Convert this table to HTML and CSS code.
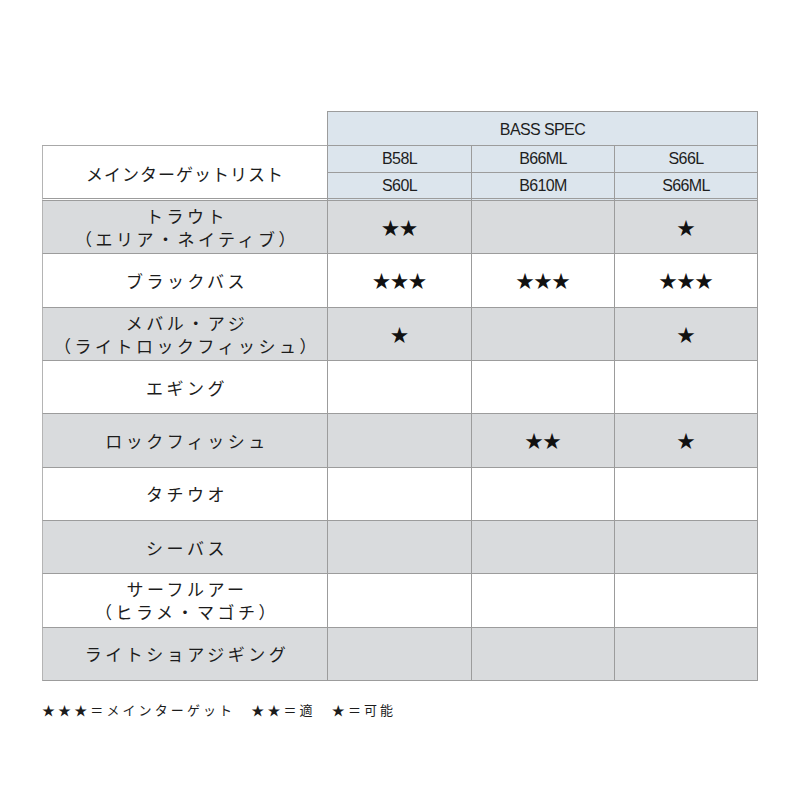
FILE: index.html
```html
<!DOCTYPE html>
<html lang="ja">
<head>
<meta charset="utf-8">
<title>BASS SPEC</title>
<link rel="stylesheet" href="styles.css">
</head>
<body>
<div class="page">
  <div class="spec">
    <div class="blank"></div>
    <div class="series">BASS SPEC</div>

    <div class="target">メインターゲットリスト</div>
    <div class="model">B58L</div>
    <div class="model">B66ML</div>
    <div class="model">S66L</div>
    <div class="model last">S60L</div>
    <div class="model last">B610M</div>
    <div class="model last">S66ML</div>

    <div class="label gray">トラウト<br>（エリア・ネイティブ）</div>
    <div class="cell gray">★★</div>
    <div class="cell gray"></div>
    <div class="cell gray">★</div>

    <div class="label">ブラックバス</div>
    <div class="cell">★★★</div>
    <div class="cell">★★★</div>
    <div class="cell">★★★</div>

    <div class="label gray">メバル・アジ<br>（ライトロックフィッシュ）</div>
    <div class="cell gray">★</div>
    <div class="cell gray"></div>
    <div class="cell gray">★</div>

    <div class="label">エギング</div>
    <div class="cell"></div>
    <div class="cell"></div>
    <div class="cell"></div>

    <div class="label gray">ロックフィッシュ</div>
    <div class="cell gray"></div>
    <div class="cell gray">★★</div>
    <div class="cell gray">★</div>

    <div class="label">タチウオ</div>
    <div class="cell"></div>
    <div class="cell"></div>
    <div class="cell"></div>

    <div class="label gray">シーバス</div>
    <div class="cell gray"></div>
    <div class="cell gray"></div>
    <div class="cell gray"></div>

    <div class="label">サーフルアー<br>（ヒラメ・マゴチ）</div>
    <div class="cell"></div>
    <div class="cell"></div>
    <div class="cell"></div>

    <div class="label gray">ライトショアジギング</div>
    <div class="cell gray"></div>
    <div class="cell gray"></div>
    <div class="cell gray"></div>
  </div>
  <p class="legend">★★★＝メインターゲット　★★＝適　★＝可能</p>
</div>
</body>
</html>
```
FILE: styles.css
```css
html, body {
  margin: 0;
  padding: 0;
  background: #ffffff;
}

.page {
  padding: 111px 0 0 42px;
  font-family: "Noto Sans CJK JP", "Liberation Sans", sans-serif;
  color: #1c1c1c;
}

.spec {
  display: grid;
  grid-template-columns: 286px 144px 143px 143px;
  grid-template-rows: 35px 27px 28px repeat(9, 53.33px);
  width: 716px;
}

.spec > div {
  box-sizing: border-box;
  display: flex;
  align-items: center;
  justify-content: center;
  text-align: center;
  border-right: 1px solid #9c9c9c;
  border-bottom: 1px solid #9c9c9c;
}

.blank {
  background: #ffffff;
}

.spec > .blank {
  border-bottom-color: #a8a8a8;
}

.series {
  grid-column: 2 / span 3;
  background: #dce5ed;
  font-family: "Liberation Sans", Arial, sans-serif;
  font-size: 16px;
  letter-spacing: -0.6px;
  color: #1e1e1e;
  padding-top: 2px;
}

.spec > .series {
  border-top: 1px solid #9c9c9c;
}

.target {
  grid-row: 2 / span 2;
  background: #ffffff;
  font-size: 17px;
  letter-spacing: 1px;
  padding-top: 2px;
}

.spec > .target {
  border-left: 1px solid #b4b4b4;
  border-bottom: 3px double #9c9c9c;
}

.model {
  background: #dce5ed;
  font-family: "Liberation Sans", Arial, sans-serif;
  font-size: 16px;
  letter-spacing: -0.6px;
  color: #1e1e1e;
}

.spec > .model.last {
  border-bottom: 3px double #9c9c9c;
}

.label {
  font-size: 17px;
  line-height: 23px;
  letter-spacing: 3.5px;
  background: #ffffff;
  padding-left: 4px;
}

.spec > .label {
  border-left: 1px solid #b4b4b4;
}

.cell {
  background: #ffffff;
  font-size: 18px;
  letter-spacing: 0;
  color: #111;
}

.spec > .gray {
  background: #d9dbdd;
}

.legend {
  margin: 20px 0 0 0;
  font-size: 13px;
  letter-spacing: 3.1px;
  line-height: 18px;
  color: #1c1c1c;
}
```
